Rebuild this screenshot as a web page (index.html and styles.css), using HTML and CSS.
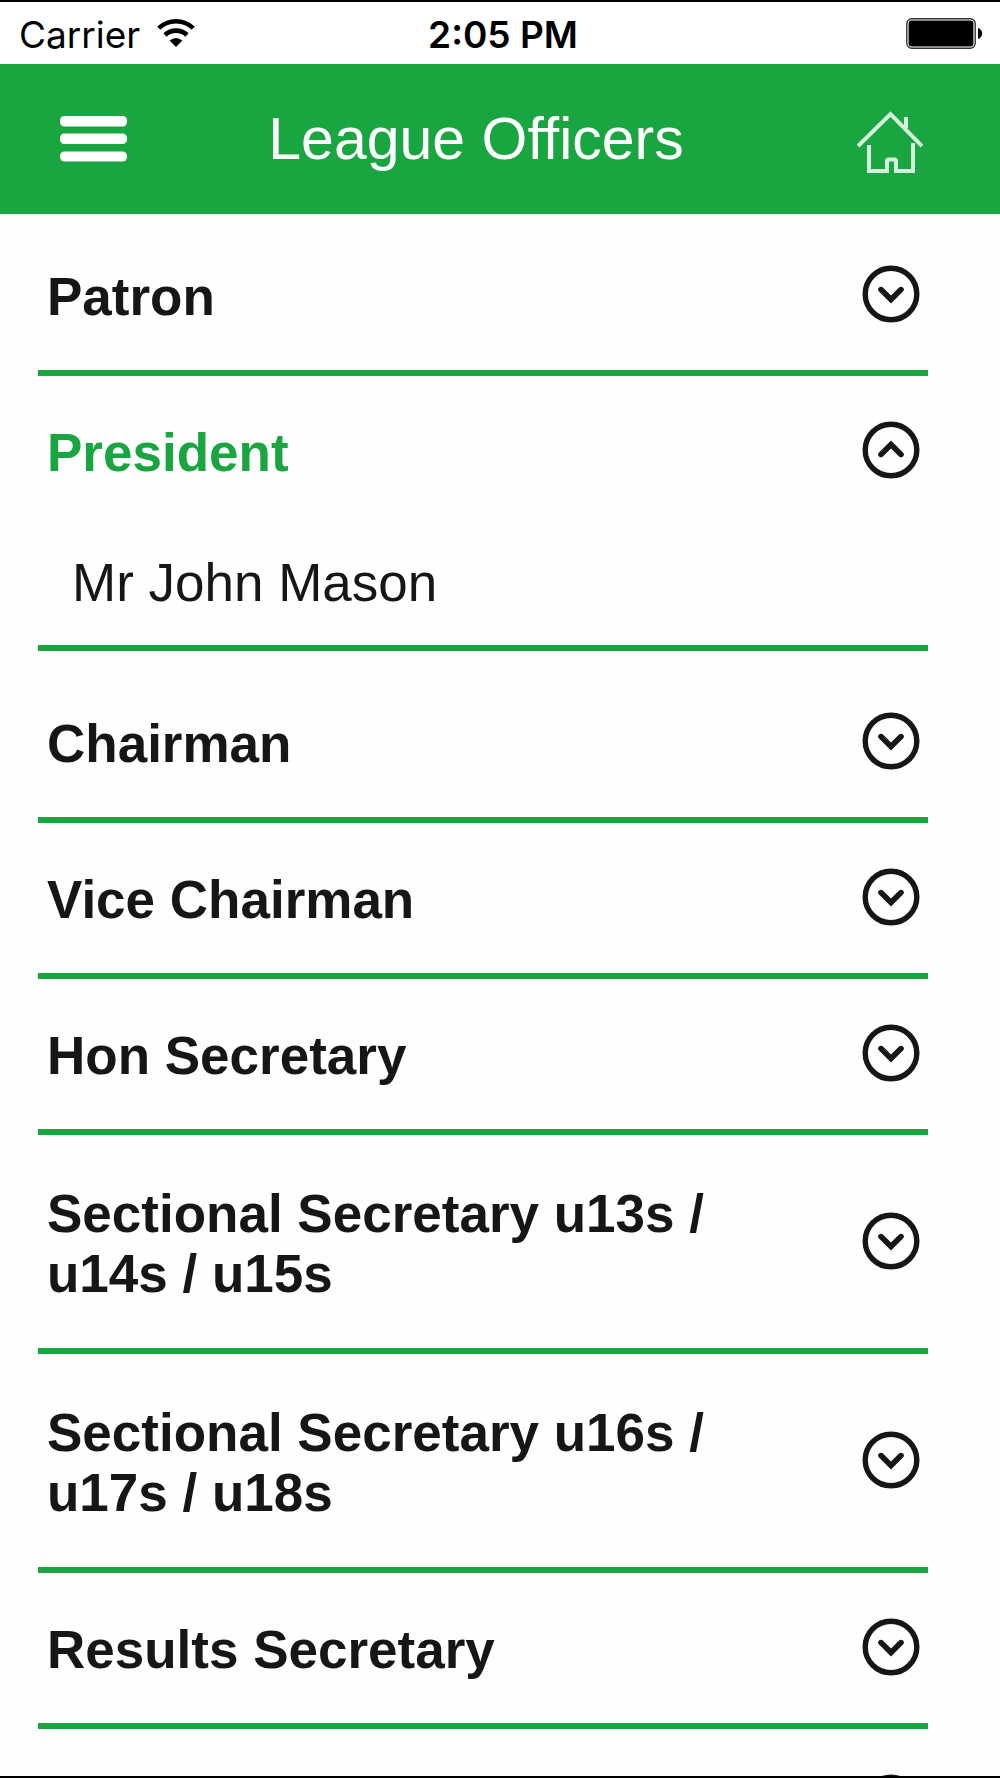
FILE: index.html
```html
<!DOCTYPE html>
<html lang="en">
<head>
  <meta charset="utf-8">
  <meta name="viewport" content="width=device-width, initial-scale=1">
  <title>League Officers</title>
  <link rel="stylesheet" href="styles.css">
</head>
<body>
  <svg class="symbols" aria-hidden="true">
    <symbol id="chevron-circle" viewBox="0 0 58 58">
      <circle cx="29" cy="29" r="25.8" fill="none" stroke="currentColor" stroke-width="5.4"/>
      <path d="M19 24.6 29 34.600 39 24.600" fill="none" stroke="currentColor" stroke-width="5.6" stroke-linecap="round"/>
    </symbol>
  </svg>
  <div class="screen">
    <div class="status">
      <div class="status-carrier">
        <span>Carrier</span>
        <svg class="wifi" viewBox="0 0 38 28" aria-hidden="true">
          <g fill="none" stroke="#000" stroke-width="4.6">
            <path d="M1.8 9.2C11.5 0 26.500 0 36.200 9.200"/>
            <path d="M8 16C14 10.200 24 10.200 30 16"/>
          </g>
          <path d="M12.600 21.600Q19 16.400 25.400 21.600L19 28Z"/>
        </svg>
      </div>
      <span class="status-time">2:05 PM</span>
      <svg class="battery" viewBox="0 0 77 31" aria-hidden="true">
        <rect x="0.800" y="0.800" width="68.400" height="29.400" rx="5" fill="#fff" stroke="#333" stroke-width="1.400"/>
        <rect x="2.600" y="2.600" width="64.800" height="25.800" rx="3"/>
        <path d="M72 10C77.600 11.500 77.600 19.500 72 21Z"/>
      </svg>
    </div>

    <header class="header">
      <button class="icon-button" type="button" aria-label="Menu">
        <svg class="menu-icon" viewBox="0 0 67 46" fill="#fff" aria-hidden="true">
          <rect width="67" height="10.500" rx="4.500"/>
          <rect y="17.500" width="67" height="10.500" rx="4.500"/>
          <rect y="35.500" width="67" height="10" rx="4.500"/>
        </svg>
      </button>
      <h1 class="title">League Officers</h1>
      <a class="home" href="#" aria-label="Home">
        <svg class="home-icon" viewBox="0 0 66 62" fill="none" stroke="#d5f0dc" stroke-width="4" aria-hidden="true">
          <path d="M1 35 33.500 3 65 35M49 6V17M12 34V60H30V50Q30 48.500 31.500 48.500H37.500Q39 48.500 39 50V60H56V32"/>
        </svg>
      </a>
    </header>

    <main class="officers">
      <section class="officer">
        <button class="officer-toggle" type="button" aria-expanded="false"><span>Patron</span><svg class="chevron" aria-hidden="true"><use href="#chevron-circle"/></svg></button>
      </section>
      <section class="officer officer-open">
        <button class="officer-toggle" type="button" aria-expanded="true"><span>President</span><svg class="chevron" aria-hidden="true"><use href="#chevron-circle"/></svg></button>
        <p class="officer-name">Mr John Mason</p>
      </section>
      <section class="officer">
        <button class="officer-toggle" type="button" aria-expanded="false"><span>Chairman</span><svg class="chevron" aria-hidden="true"><use href="#chevron-circle"/></svg></button>
      </section>
      <section class="officer">
        <button class="officer-toggle" type="button" aria-expanded="false"><span>Vice Chairman</span><svg class="chevron" aria-hidden="true"><use href="#chevron-circle"/></svg></button>
      </section>
      <section class="officer">
        <button class="officer-toggle" type="button" aria-expanded="false"><span>Hon Secretary</span><svg class="chevron" aria-hidden="true"><use href="#chevron-circle"/></svg></button>
      </section>
      <section class="officer officer-tall">
        <button class="officer-toggle" type="button" aria-expanded="false"><span>Sectional Secretary u13s / u14s / u15s</span><svg class="chevron" aria-hidden="true"><use href="#chevron-circle"/></svg></button>
      </section>
      <section class="officer officer-tall">
        <button class="officer-toggle" type="button" aria-expanded="false"><span>Sectional Secretary u16s / u17s / u18s</span><svg class="chevron" aria-hidden="true"><use href="#chevron-circle"/></svg></button>
      </section>
      <section class="officer">
        <button class="officer-toggle" type="button" aria-expanded="false"><span>Results Secretary</span><svg class="chevron" aria-hidden="true"><use href="#chevron-circle"/></svg></button>
      </section>
      <section class="officer">
        <button class="officer-toggle" type="button" aria-expanded="false" aria-label="More officers"><span></span><svg class="chevron" aria-hidden="true"><use href="#chevron-circle"/></svg></button>
      </section>
    </main>
  </div>
</body>
</html>
```
FILE: styles.css
```css
:root {
  --green: #19a53f;
  --ink: #161616;
}

* {
  box-sizing: border-box;
}

body {
  margin: 0;
  background: #fefefe;
  color: var(--ink);
  font-family: "Liberation Sans", Arial, sans-serif;
}

.symbols {
  display: none;
}

.screen {
  height: 100vh;
  overflow: hidden;
  border-top: 2px solid #000;
  border-bottom: 2px solid #000;
}

.status {
  display: grid;
  grid-template-columns: 1fr auto 1fr;
  align-items: center;
  height: 62px;
  padding: 0 17px 0 19px;
  background: #fff;
  color: #000;
  font-family: Inter, sans-serif;
  font-size: 37px;
  line-height: 58px;
}

.status span {
  padding-top: 3px;
}

.status-carrier {
  display: flex;
  align-items: center;
  gap: 17px;
}

.status .status-time {
  padding-left: 4px;
  font-weight: 600;
}

.wifi {
  width: 38px;
  height: 28px;
}

.battery {
  justify-self: end;
  width: 77px;
  height: 31px;
}

.header {
  display: flex;
  align-items: center;
  height: 150px;
  padding: 0 77px 0 60px;
  background: var(--green);
  color: #fff;
}

.icon-button {
  padding: 0;
  border: 0;
  background: none;
}

.menu-icon,
.home-icon {
  display: block;
}

.menu-icon {
  width: 67px;
  height: 46px;
}

.home {
  padding-top: 6px;
}

.home-icon {
  width: 66px;
  height: 62px;
}

.title {
  flex: 1;
  margin: 0;
  padding-right: 32px;
  font-size: 59px;
  font-weight: 400;
  line-height: 68px;
  text-align: center;
}

.officers {
  padding: 6px 72px 0 38px;
}

.officer {
  border-bottom: 6px solid var(--green);
}

.officer-toggle {
  display: flex;
  align-items: center;
  justify-content: space-between;
  width: 100%;
  min-height: 150px;
  padding: 47px 8px 43px 9px;
  border: 0;
  background: none;
  color: var(--ink);
  font: bold 53px/60px "Liberation Sans", Arial, sans-serif;
  text-align: left;
}

.officer-toggle span {
  max-width: 700px;
}

.officer-tall .officer-toggle {
  padding-top: 49px;
  padding-bottom: 44px;
}

.chevron {
  flex: none;
  width: 58px;
  height: 58px;
  margin: -2px 0 4px;
}

.officer-open {
  margin-bottom: 16px;
}

.officer-open span {
  color: var(--green);
}

.officer-open .chevron {
  transform: rotate(180deg);
}

.officer-name {
  margin: 0;
  padding: 27px 34px 32px;
  font-size: 53px;
  line-height: 60px;
}
```
